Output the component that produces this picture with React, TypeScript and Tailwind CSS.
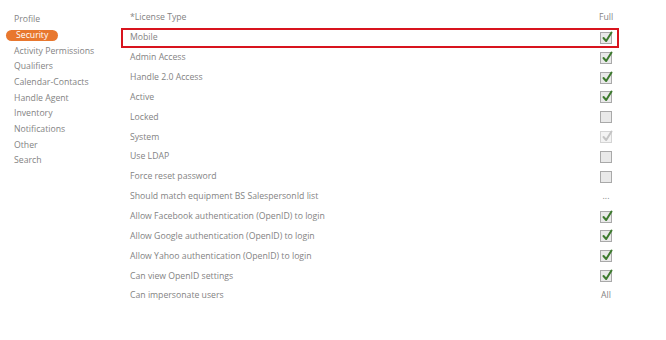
type Value = 'on' | 'off' | 'disabled' | string;

const menu = [
  'Profile',
  'Security',
  'Activity Permissions',
  'Qualifiers',
  'Calendar-Contacts',
  'Handle Agent',
  'Inventory',
  'Notifications',
  'Other',
  'Search',
];

const rows: { label: string; value: Value; selected?: boolean }[] = [
  { label: '*License Type', value: 'Full' },
  { label: 'Mobile', value: 'on', selected: true },
  { label: 'Admin Access', value: 'on' },
  { label: 'Handle 2.0 Access', value: 'on' },
  { label: 'Active', value: 'on' },
  { label: 'Locked', value: 'off' },
  { label: 'System', value: 'disabled' },
  { label: 'Use LDAP', value: 'off' },
  { label: 'Force reset password', value: 'off' },
  { label: 'Should match equipment BS SalespersonId list', value: '...' },
  { label: 'Allow Facebook authentication (OpenID) to login', value: 'on' },
  { label: 'Allow Google authentication (OpenID) to login', value: 'on' },
  { label: 'Allow Yahoo authentication (OpenID) to login', value: 'on' },
  { label: 'Can view OpenID settings', value: 'on' },
  { label: 'Can impersonate users', value: 'All' },
];

function Checkbox({ state }: { state: 'on' | 'off' | 'disabled' }) {
  const box =
    state === 'disabled'
      ? 'border-[#d4d4d4] bg-[#f3f3f3]'
      : 'border-[#a9a9a9] bg-[#e9e9e9]';
  return (
    <span className={`relative block w-[12px] h-[12px] border ${box}`}>
      {state !== 'off' && (
        <svg className="absolute -top-[2px] left-[1px] w-[11px] h-[12px]" viewBox="0 0 11 12">
          <path
            d="M1.5 7 L4.2 10 L9.5 1.5"
            fill="none"
            stroke={state === 'on' ? '#3d7a2e' : '#c4c4c4'}
            strokeWidth={2}
            strokeLinecap="round"
            strokeLinejoin="round"
          />
        </svg>
      )}
    </span>
  );
}

export default function App() {
  return (
    <div
      className="w-[666px] h-[340px] bg-white flex text-[8.7px] text-[#838383]"
      style={{ fontFamily: '"Open Sans", "Noto Sans", sans-serif' }}
    >
      {/* Side menu */}
      <nav className="w-[121px] shrink-0 pt-[12px] pl-[6px] flex flex-col">
        {menu.map((item) => (
          <div key={item} className="h-[15.67px] flex items-center">
            {item === 'Security' ? (
              <span className="bg-[#e8772e] text-white rounded-full px-[10px] h-[11px] leading-[11px]">
                {item}
              </span>
            ) : (
              <span className="pl-[8px]">{item}</span>
            )}
          </div>
        ))}
      </nav>

      {/* Settings list */}
      <div className="w-[498px] pt-[8px] flex flex-col">
        {rows.map((row) => (
          <div
            key={row.label}
            className={`h-[19.86px] flex items-center justify-between pl-[7px] pr-[4px] border-2 ${
              row.selected ? 'border-[#d8141e]' : 'border-transparent'
            }`}
          >
            <span>{row.label}</span>
            <span className="w-[14px] flex justify-center">
              {row.value === 'on' || row.value === 'off' || row.value === 'disabled' ? (
                <Checkbox state={row.value} />
              ) : (
                <span className="whitespace-nowrap flex justify-center">{row.value}</span>
              )}
            </span>
          </div>
        ))}
      </div>
    </div>
  );
}
